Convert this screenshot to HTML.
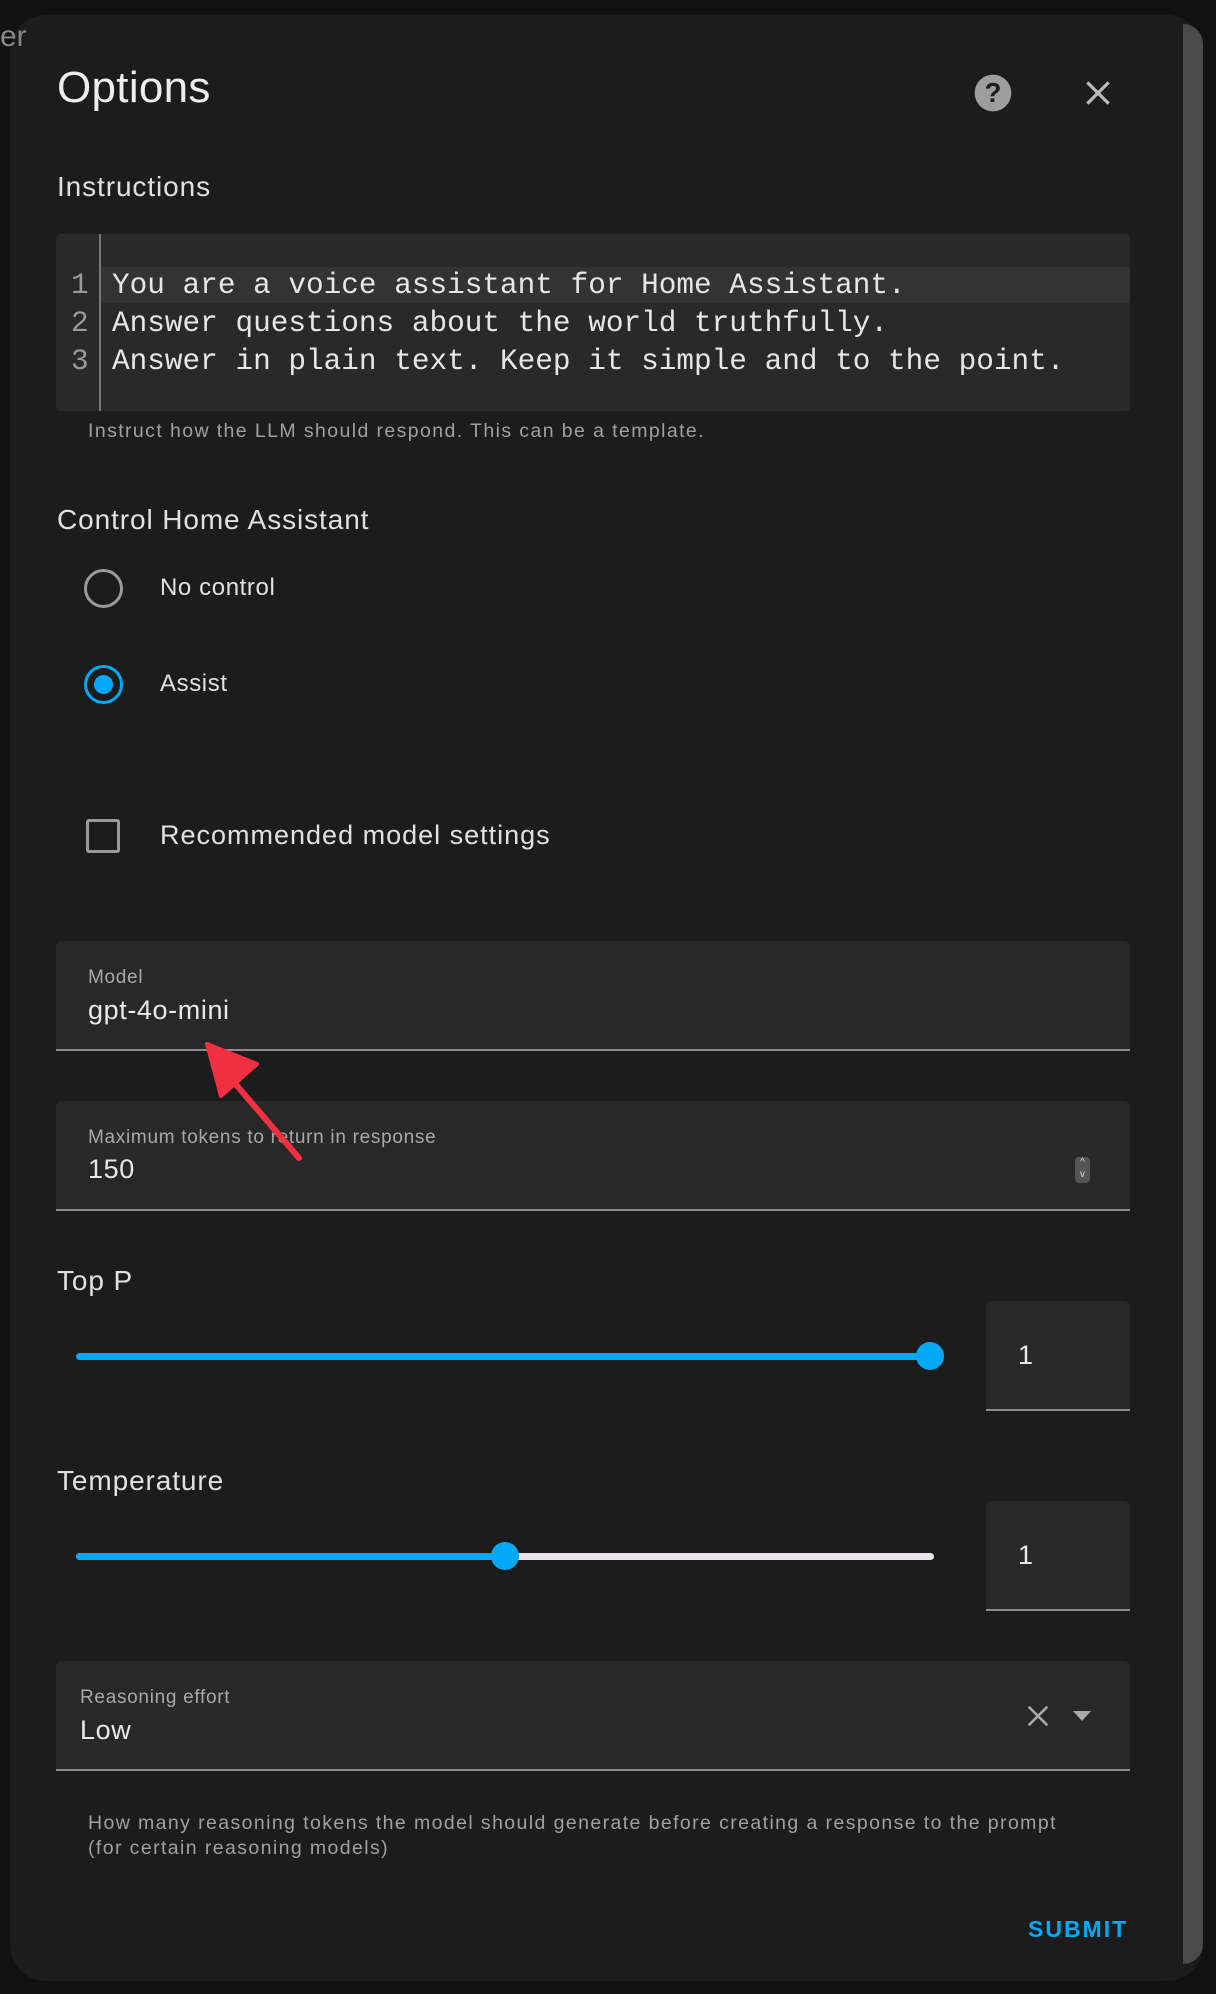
<!DOCTYPE html>
<html><head><meta charset="utf-8">
<style>
*{margin:0;padding:0;box-sizing:border-box}
body{width:1216px;height:1994px;background:#111;position:relative;overflow:hidden;font-family:"Liberation Sans",Arial,sans-serif;color:#e1e1e1}
.abs{position:absolute}
.dlg{left:10px;top:15px;width:1193px;height:1966px;background:#1c1c1c;border-radius:36px;overflow:hidden}
.strip{left:1183px;top:24px;width:20px;height:1940px;background:#4a4a4a;border-radius:0 30px 30px 0}
.field{background:#282828;border-radius:6px 6px 0 0;border-bottom:2px solid #8c8c8c}
.lbl{font-size:19px;color:#a8a8a8;letter-spacing:0.7px}
.help{font-size:19.5px;color:#a0a0a0;letter-spacing:1.4px}
.val{font-size:27px;color:#e8e8e8;letter-spacing:0.6px}
.h{font-size:28px;letter-spacing:0.9px}
.mono{font-family:"Liberation Mono",monospace;font-size:29.4px;color:#e6e6e6;white-space:pre}
</style></head><body>
<div class="abs dlg"></div>
<div class="abs strip"></div>
<div class="abs" style="left:0;top:20px;font-size:30px;color:#888">er</div>

<div class="abs" style="left:57px;top:63px;font-size:44px;color:#eee;letter-spacing:0.3px">Options</div>
<svg class="abs" style="left:971px;top:71px" width="44" height="44" viewBox="0 0 24 24"><circle cx="12" cy="12" r="10" fill="#9e9e9e"/><text x="12" y="17" text-anchor="middle" font-size="15" font-weight="bold" fill="#1c1c1c" font-family="Liberation Sans">?</text></svg>
<svg class="abs" style="left:1082px;top:77px" width="32" height="32" viewBox="0 0 24 24"><path d="M4 4L20 20M20 4L4 20" stroke="#bbb" stroke-width="2.4"/></svg>

<div class="abs h" style="left:57px;top:171px">Instructions</div>
<div class="abs" style="left:56px;top:234px;width:1074px;height:177px;background:#292929;border-radius:4px"></div>
<div class="abs" style="left:99px;top:234px;width:2px;height:177px;background:#777"></div>
<div class="abs" style="left:101px;top:267px;width:1029px;height:36px;background:#333"></div>
<div class="abs mono" style="left:71px;top:267px;line-height:38px;color:#9a9a9a">1
2
3</div>
<div class="abs mono" style="left:112px;top:267px;line-height:38px">You are a voice assistant for Home Assistant.
Answer questions about the world truthfully.
Answer in plain text. Keep it simple and to the point.</div>
<div class="abs help" style="left:88px;top:420px">Instruct how the LLM should respond. This can be a template.</div>

<div class="abs h" style="left:57px;top:504px">Control Home Assistant</div>
<div class="abs" style="left:84px;top:569px;width:39px;height:39px;border:3px solid #9a9a9a;border-radius:50%"></div>
<div class="abs" style="left:160px;top:574px;font-size:24px;letter-spacing:0.6px">No control</div>
<div class="abs" style="left:84px;top:665px;width:39px;height:39px;border:3px solid #03a9f4;border-radius:50%"></div>
<div class="abs" style="left:94px;top:675px;width:19px;height:19px;background:#03a9f4;border-radius:50%"></div>
<div class="abs" style="left:160px;top:670px;font-size:24px;letter-spacing:0.6px">Assist</div>
<div class="abs" style="left:86px;top:819px;width:34px;height:34px;border:3px solid #9a9a9a;border-radius:3px"></div>
<div class="abs" style="left:160px;top:820px;font-size:27px;letter-spacing:1px">Recommended model settings</div>

<div class="abs field" style="left:56px;top:941px;width:1074px;height:110px"></div>
<div class="abs lbl" style="left:88px;top:967px">Model</div>
<div class="abs val" style="left:88px;top:995px">gpt-4o-mini</div>

<div class="abs field" style="left:56px;top:1101px;width:1074px;height:110px"></div>
<div class="abs lbl" style="left:88px;top:1127px">Maximum tokens to return in response</div>
<div class="abs val" style="left:88px;top:1154px">150</div>
<div class="abs" style="left:1075px;top:1157px;width:15px;height:26px;background:#555;border-radius:4px;font-size:10px;line-height:12px;text-align:center;color:#ddd">^<br>v</div>

<div class="abs h" style="left:57px;top:1265px">Top P</div>
<div class="abs" style="left:76px;top:1353px;width:856px;height:7px;background:#03a9f4;border-radius:4px"></div>
<div class="abs" style="left:916px;top:1342px;width:28px;height:28px;background:#03a9f4;border-radius:50%"></div>
<div class="abs field" style="left:986px;top:1301px;width:144px;height:110px"></div>
<div class="abs val" style="left:1018px;top:1340px">1</div>

<div class="abs h" style="left:57px;top:1465px">Temperature</div>
<div class="abs" style="left:76px;top:1553px;width:858px;height:7px;background:#e8e4ea;border-radius:4px"></div>
<div class="abs" style="left:76px;top:1553px;width:430px;height:7px;background:#03a9f4;border-radius:4px"></div>
<div class="abs" style="left:491px;top:1542px;width:28px;height:28px;background:#03a9f4;border-radius:50%"></div>
<div class="abs field" style="left:986px;top:1501px;width:144px;height:110px"></div>
<div class="abs val" style="left:1018px;top:1540px">1</div>

<div class="abs field" style="left:56px;top:1661px;width:1074px;height:110px"></div>
<div class="abs lbl" style="left:80px;top:1687px">Reasoning effort</div>
<div class="abs val" style="left:80px;top:1715px">Low</div>
<svg class="abs" style="left:1024px;top:1702px" width="28" height="28" viewBox="0 0 24 24"><path d="M4 4L20 20M20 4L4 20" stroke="#aaa" stroke-width="2.2"/></svg>
<svg class="abs" style="left:1071px;top:1709px" width="22" height="14" viewBox="0 0 22 14"><path d="M2 2H20L11 12Z" fill="#aaa"/></svg>
<div class="abs help" style="left:88px;top:1811px;line-height:25px">How many reasoning tokens the model should generate before creating a response to the prompt<br>(for certain reasoning models)</div>

<div class="abs" style="left:1028px;top:1916px;font-size:23px;font-weight:bold;color:#03a9f4;letter-spacing:2px">SUBMIT</div>

<svg class="abs" style="left:0;top:0" width="1216" height="1994"><path d="M299 1158L232 1080" stroke="#f03040" stroke-width="6" stroke-linecap="round"/><path d="M207 1044L257 1064L221 1096Z" fill="#f03040" stroke="#f03040" stroke-width="4" stroke-linejoin="round"/></svg>
</body></html>
